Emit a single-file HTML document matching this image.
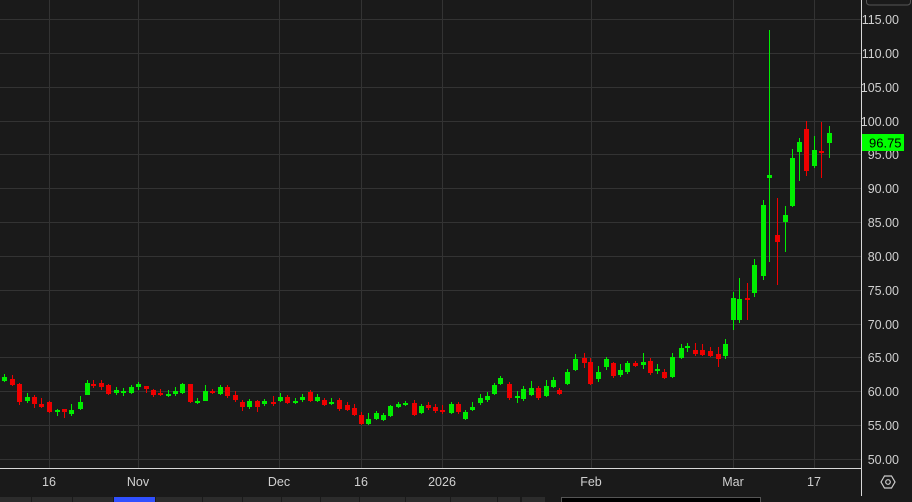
<!DOCTYPE html>
<html><head><meta charset="utf-8"><style>
html,body{margin:0;padding:0;background:#1a1a1a;width:912px;height:502px;overflow:hidden}
svg{display:block}
text{font-family:"Liberation Sans",sans-serif;font-size:12.5px;fill:#d0d0d0}
</style></head><body>
<svg width="912" height="502" viewBox="0 0 912 502">
<rect width="912" height="502" fill="#1a1a1a"/>
<g stroke="#333" stroke-width="1">
<line x1="0" x2="861" y1="19.5" y2="19.5"/><line x1="0" x2="861" y1="53.5" y2="53.5"/><line x1="0" x2="861" y1="87.5" y2="87.5"/><line x1="0" x2="861" y1="121.5" y2="121.5"/><line x1="0" x2="861" y1="154.5" y2="154.5"/><line x1="0" x2="861" y1="188.5" y2="188.5"/><line x1="0" x2="861" y1="222.5" y2="222.5"/><line x1="0" x2="861" y1="256.5" y2="256.5"/><line x1="0" x2="861" y1="290.5" y2="290.5"/><line x1="0" x2="861" y1="324.5" y2="324.5"/><line x1="0" x2="861" y1="357.5" y2="357.5"/><line x1="0" x2="861" y1="391.5" y2="391.5"/><line x1="0" x2="861" y1="425.5" y2="425.5"/><line x1="0" x2="861" y1="459.5" y2="459.5"/>
<line x1="49.5" x2="49.5" y1="0" y2="468"/><line x1="138.5" x2="138.5" y1="0" y2="468"/><line x1="279.5" x2="279.5" y1="0" y2="468"/><line x1="361.5" x2="361.5" y1="0" y2="468"/><line x1="442.5" x2="442.5" y1="0" y2="468"/><line x1="591.5" x2="591.5" y1="0" y2="468"/><line x1="733.5" x2="733.5" y1="0" y2="468"/><line x1="814.5" x2="814.5" y1="0" y2="468"/>
</g>
<g id="c"></g>
<line x1="0" x2="861" y1="468.5" y2="468.5" stroke="#d8d8d8"/>
<line x1="861.5" x2="861.5" y1="0" y2="496" stroke="#d8d8d8"/>
<rect x="866.5" y="-4" width="44" height="9" rx="3" fill="none" stroke="#555"/>
<g text-anchor="end">
<text x="899" y="24">115.00</text><text x="899" y="58">110.00</text><text x="899" y="92">105.00</text><text x="899" y="126">100.00</text><text x="899" y="159">95.00</text><text x="899" y="193">90.00</text><text x="899" y="227">85.00</text><text x="899" y="261">80.00</text><text x="899" y="295">75.00</text><text x="899" y="329">70.00</text><text x="899" y="362">65.00</text><text x="899" y="396">60.00</text><text x="899" y="430">55.00</text><text x="899" y="464">50.00</text>
</g>
<rect x="862" y="134" width="42" height="17" fill="#00ff00"/>
<text x="869" y="147.5" style="fill:#000;font-size:13px">96.75</text>
<g text-anchor="middle">
<text x="49" y="486">16</text><text x="138" y="486">Nov</text><text x="279" y="486">Dec</text><text x="361" y="486">16</text><text x="442" y="486">2026</text><text x="591" y="486">Feb</text><text x="733" y="486">Mar</text><text x="814" y="486">17</text>
</g>
<polygon points="881,482 884.5,476 891.5,476 895,482 891.5,488 884.5,488" fill="none" stroke="#ccc" stroke-width="1.2"/>
<circle cx="888" cy="482" r="2.3" fill="none" stroke="#ccc" stroke-width="1.2"/>
<g fill="#2c2c2c">
<rect x="0" y="497" width="31" height="5"/><rect x="32" y="497" width="40" height="5"/><rect x="73" y="497" width="40" height="5"/><rect x="114" y="497" width="41" height="5" fill="#3050ff"/><rect x="156" y="497" width="46" height="5"/><rect x="203" y="497" width="39" height="5"/><rect x="243" y="497" width="38" height="5"/><rect x="282" y="497" width="38" height="5"/><rect x="321" y="497" width="38" height="5"/><rect x="360" y="497" width="45" height="5"/><rect x="406" y="497" width="44" height="5"/><rect x="451" y="497" width="46" height="5"/><rect x="498" y="497" width="22" height="5"/><rect x="522" y="497" width="23" height="5"/>
</g>
<rect x="561.5" y="497.5" width="199" height="6" fill="#000" stroke="#555"/>
</svg>
<script>
var d=[
[4,377,381,1,374,382],[12,379,385,0,375,386],[19,384,402,0,383,405],[27,397,401,1,393,403],[34,397,404,0,395,408],[41,404,407,0,398,408],[49,402,412,0,401,413],[57,410,411,1,409,416],[64,409,412,0,409,418],[71,410,414,1,404,416],[80,402,409,1,396,410],[87,383,395,1,380,395],[93,384,385,0,380,388],[101,383,387,0,380,390],[108,385,394,0,384,395],[116,390,393,1,387,395],[123,391,392,1,388,396],[131,387,393,1,385,394],[138,384,387,1,382,390],[146,386,389,0,386,393],[153,390,395,0,389,397],[160,393,394,0,389,396],[168,394,396,1,390,397],[175,391,394,1,387,396],[182,384,393,1,383,394],[190,384,402,0,384,403],[197,401,402,1,398,404],[205,391,401,1,385,401],[212,391,393,0,389,394],[220,387,394,1,385,395],[227,387,396,0,385,398],[235,395,400,0,391,402],[242,402,407,0,400,411],[249,401,407,1,399,409],[257,401,407,0,400,412],[264,401,404,1,399,406],[273,402,403,0,396,406],[280,397,401,1,393,402],[287,397,403,0,395,404],[295,401,403,1,398,404],[302,397,400,1,394,402],[310,392,401,0,390,402],[317,397,401,1,394,402],[324,400,405,0,398,406],[331,402,403,1,398,405],[339,400,409,0,398,411],[347,405,410,0,402,411],[354,408,415,0,404,416],[361,415,424,0,412,425],[368,419,424,1,413,425],[376,413,419,1,411,420],[383,415,420,1,413,421],[390,406,416,1,405,417],[398,404,407,1,402,408],[405,403,404,1,401,406],[414,403,415,0,400,416],[421,406,413,1,404,414],[428,405,408,0,402,410],[435,407,411,0,404,413],[442,410,411,0,405,414],[451,404,413,1,402,414],[458,404,412,0,402,414],
[465,412,419,1,410,420],[472,407,410,1,402,411],[480,398,403,1,394,405],[487,396,400,1,392,402],[494,385,394,1,383,395],[500,378,384,1,376,385],[509,384,398,0,382,400],[517,396,397,1,391,403],[523,389,399,1,386,401],[531,388,395,1,381,396],[538,388,398,0,386,400],[546,386,396,1,380,397],[553,380,387,1,377,388],[559,390,394,0,388,395],[567,372,384,1,369,385],[575,359,370,1,354,371],[584,358,363,0,353,368],[590,362,384,0,358,385],[598,372,379,1,366,382],[606,359,367,1,357,370],[613,363,376,0,362,378],[620,370,375,1,364,377],[627,363,372,1,361,374],[635,363,366,0,361,367],[643,362,365,1,353,369],[650,361,373,0,358,375],[657,369,370,1,364,374],[664,372,378,0,369,379],[672,357,377,1,353,378],[681,348,358,1,344,359],[687,346,347,1,343,352],[695,350,354,0,343,356],[702,350,355,0,344,356],[710,351,356,0,347,357],[718,354,359,0,347,367],[725,344,356,1,339,359],
[733,298,320,1,292,330],[739,299,320,1,278,323],[747,298,300,0,283,320],[754,265,293,1,259,297],[763,205,276,1,200,280],[769,175,178,1,30,262],[777,235,242,0,198,285],[785,215,222,1,206,252],[792,158,206,1,149,207],[799,142,152,1,138,181],[806,129,171,0,121,176],[814,150,166,1,136,168],[821,151,153,0,122,178],[829,133,143,1,126,158]];
var s='';
d.forEach(function(c){var col=c[3]?'#00ee00':'#ee0000';var h=Math.max(2,c[2]-c[1]);
s+='<line x1="'+(c[0]+.5)+'" x2="'+(c[0]+.5)+'" y1="'+c[4]+'" y2="'+c[5]+'" stroke="'+col+'"/>';
s+='<rect x="'+(c[0]-2)+'" y="'+c[1]+'" width="5" height="'+h+'" fill="'+col+'"/>';});
document.getElementById('c').innerHTML=s;
</script>
</body></html>
